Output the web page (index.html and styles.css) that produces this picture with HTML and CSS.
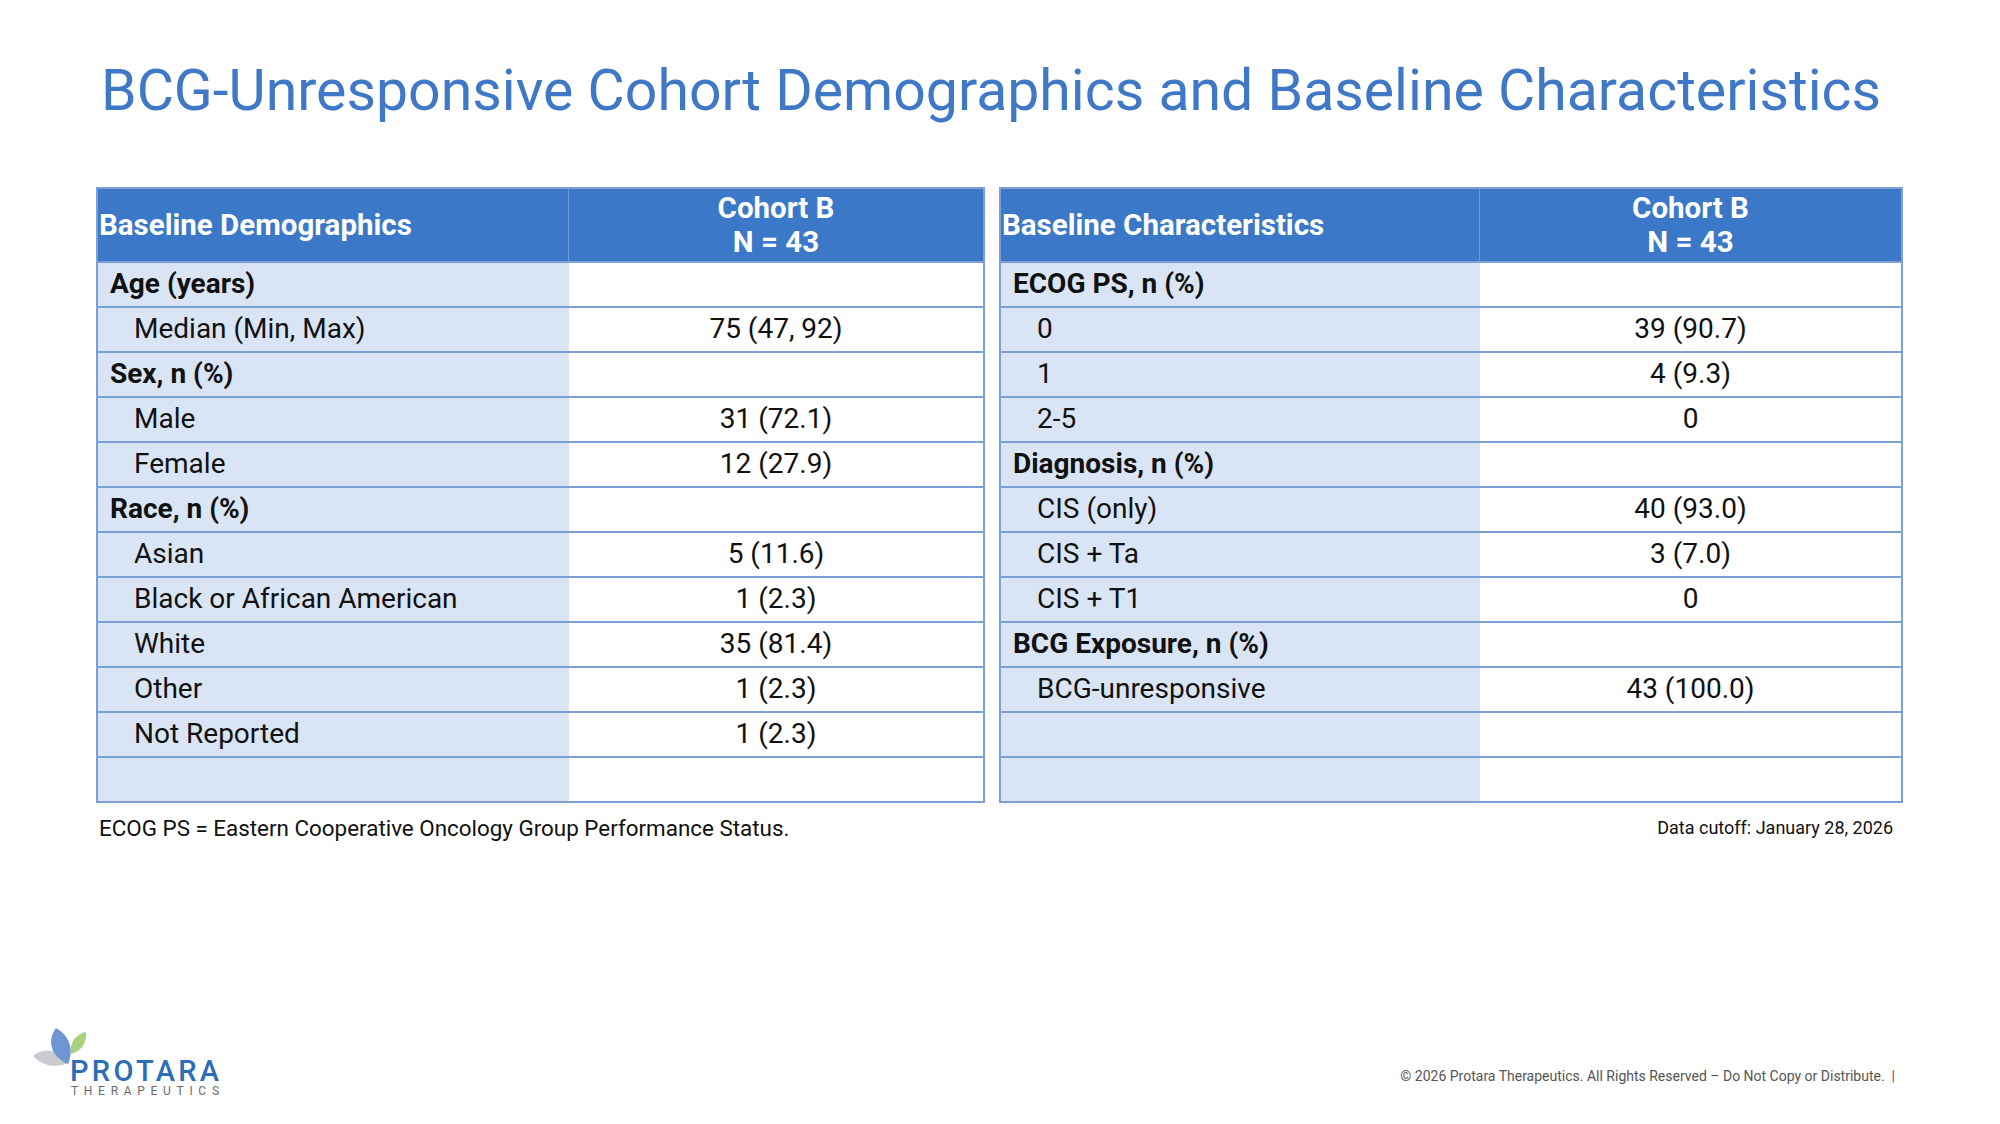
FILE: index.html
```html
<!DOCTYPE html>
<html lang="en">
<head>
<meta charset="utf-8">
<title>BCG-Unresponsive Cohort Demographics and Baseline Characteristics</title>
<link rel="stylesheet" href="styles.css">
</head>
<body>
<div class="page">
  <h1 class="title">BCG-Unresponsive Cohort Demographics and Baseline Characteristics</h1>

  <div class="tables">
    <div class="tbl tbl-left">
      <div class="hc hc-label">Baseline Demographics</div>
      <div class="hc hc-value">Cohort B<br>N = 43</div>

      <div class="c lab cat">Age (years)</div><div class="c val"></div>
      <div class="c lab sub">Median (Min, Max)</div><div class="c val">75 (47, 92)</div>
      <div class="c lab cat">Sex, n (%)</div><div class="c val"></div>
      <div class="c lab sub">Male</div><div class="c val">31 (72.1)</div>
      <div class="c lab sub">Female</div><div class="c val">12 (27.9)</div>
      <div class="c lab cat">Race, n (%)</div><div class="c val"></div>
      <div class="c lab sub">Asian</div><div class="c val">5 (11.6)</div>
      <div class="c lab sub">Black or African American</div><div class="c val">1 (2.3)</div>
      <div class="c lab sub">White</div><div class="c val">35 (81.4)</div>
      <div class="c lab sub">Other</div><div class="c val">1 (2.3)</div>
      <div class="c lab sub">Not Reported</div><div class="c val">1 (2.3)</div>
      <div class="c lab"></div><div class="c val"></div>
    </div>

    <div class="tbl tbl-right">
      <div class="hc hc-label">Baseline Characteristics</div>
      <div class="hc hc-value">Cohort B<br>N = 43</div>

      <div class="c lab cat">ECOG PS, n (%)</div><div class="c val"></div>
      <div class="c lab sub">0</div><div class="c val">39 (90.7)</div>
      <div class="c lab sub">1</div><div class="c val">4 (9.3)</div>
      <div class="c lab sub">2-5</div><div class="c val">0</div>
      <div class="c lab cat">Diagnosis, n (%)</div><div class="c val"></div>
      <div class="c lab sub">CIS (only)</div><div class="c val">40 (93.0)</div>
      <div class="c lab sub">CIS + Ta</div><div class="c val">3 (7.0)</div>
      <div class="c lab sub">CIS + T1</div><div class="c val">0</div>
      <div class="c lab cat">BCG Exposure, n (%)</div><div class="c val"></div>
      <div class="c lab sub">BCG-unresponsive</div><div class="c val">43 (100.0)</div>
      <div class="c lab"></div><div class="c val"></div>
      <div class="c lab"></div><div class="c val"></div>
    </div>
  </div>

  <div class="notes">
    <span class="abbr">ECOG PS = Eastern Cooperative Oncology Group Performance Status.</span>
    <span class="cutoff">Data cutoff: January 28, 2026</span>
  </div>

  <footer class="footer">
    <svg class="logo" width="200" height="76" viewBox="0 0 200 76" aria-label="Protara Therapeutics">
      <path d="M3,34 C12,26 28,26 40,40 C27,47 12,44 3,34 Z" fill="#c8cbcf"/>
      <path d="M26,6 C17,18 20,34 38,42 C44,28 40,14 26,6 Z" fill="#6f96d3"/>
      <path d="M56,10 C45,12 39,22 41,32 C52,29 57,20 56,10 Z" fill="#a8d07f"/>
      <text x="40" y="59" class="logo-main" textLength="149" lengthAdjust="spacing">PROTARA</text>
      <text x="41" y="73" class="logo-sub" textLength="148" lengthAdjust="spacing">THERAPEUTICS</text>
    </svg>
    <span class="copy">© 2026 Protara Therapeutics. All Rights Reserved – Do Not Copy or Distribute.&nbsp; |</span>
  </footer>
</div>
</body>
</html>
```

FILE: styles.css
```css
html, body {
  margin: 0;
  padding: 0;
  background: #ffffff;
}

body {
  font-family: Roboto, "Liberation Sans", Arial, sans-serif;
  color: #111111;
}

.page {
  width: 2000px;
  height: 1124px;
  display: flex;
  flex-direction: column;
  box-sizing: border-box;
  overflow: hidden;
}

.title {
  margin: 0;
  padding: 56px 0 0 101px;
  font-size: 57.2px;
  line-height: 70px;
  font-weight: 400;
  color: #3e78c6;
  white-space: nowrap;
}

.tables {
  display: flex;
  align-items: flex-start;
  gap: 14px;
  margin-top: 61px;
  padding-left: 96px;
}

.tbl {
  display: grid;
  border: 2px solid #7aa0d5;
  background: #ffffff;
}

.tbl-left {
  grid-template-columns: 471px 414px;
}

.tbl-right {
  grid-template-columns: 479px 421px;
}

.hc {
  height: 72px;
  box-sizing: border-box;
  background: #3b78c8;
  color: #ffffff;
  font-weight: 700;
  font-size: 29.5px;
  line-height: 34px;
  display: flex;
  align-items: center;
}

.hc-label {
  padding-left: 1px;
  border-right: 1px solid #6f9ad6;
}

.hc-value {
  justify-content: center;
  text-align: center;
}

.c {
  height: 45px;
  box-sizing: border-box;
  border-top: 2px solid #7aa0d5;
  font-size: 28px;
  line-height: 42px;
  white-space: nowrap;
}

.lab {
  background: #d9e5f4;
}

.cat {
  font-weight: 700;
  padding-left: 12px;
}

.sub {
  padding-left: 36px;
}

.val {
  text-align: center;
  background: #ffffff;
}

.notes {
  display: flex;
  justify-content: space-between;
  align-items: center;
  margin-top: 12px;
  padding: 0 107px 0 99px;
  height: 26px;
}

.abbr {
  font-size: 22.4px;
  line-height: 26px;
}

.cutoff {
  font-size: 18px;
  line-height: 26px;
}

.footer {
  margin-top: auto;
  display: flex;
  justify-content: space-between;
  align-items: flex-end;
  padding: 0 105px 26px 30px;
}

.logo {
  display: block;
}

.logo-main {
  font-family: Roboto, "Liberation Sans", sans-serif;
  font-size: 29px;
  font-weight: 500;
  fill: #2c6db5;
}

.logo-sub {
  font-family: Roboto, "Liberation Sans", sans-serif;
  font-size: 12px;
  font-weight: 400;
  fill: #6a6a6a;
}

.copy {
  font-size: 14px;
  line-height: 16px;
  color: #555555;
  margin-bottom: 14px;
}
```
